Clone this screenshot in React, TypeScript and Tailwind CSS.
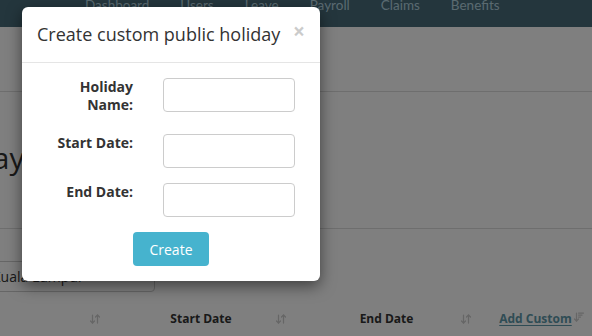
import { ArrowDownUp, ArrowDownWideNarrow } from "lucide-react"

const navItems = ["Dashboard", "Users", "Leave", "Payroll", "Claims", "Benefits"]

const FormRow = ({ label, className }: { label: string; className?: string }) => (
  <div className={`flex items-start ${className ?? ""}`}>
    <label className="w-[96px] text-right text-[14px] font-bold leading-[18px] text-[#333]">{label}</label>
    <input type="text" className="ml-[30px] h-[34px] w-[132px] rounded-[4px] border border-[#ccc] bg-white px-3 text-[14px] outline-none" />
  </div>
)

const App = () => {
  return (
    <div className="relative h-[336px] w-[592px] overflow-hidden bg-white font-['Open_Sans',sans-serif]">
      <nav className="-mt-[23px] flex h-[50px] items-center bg-[#486c7a] pl-[85px] pt-[6px] font-['Lato',sans-serif] text-[13.5px] text-[#b4d4e0]">
        <div className="flex gap-[31px]">
          {navItems.map((n) => (
            <span key={n}>{n}</span>
          ))}
        </div>
      </nav>

      <div className="h-[65px] border-b border-[#ddd]" />

      <div className="h-[137px] border-b border-[#ddd] pt-[49px]">
        <h1 className="-ml-[173px] whitespace-nowrap text-[30px] leading-[33px] text-[#333]">Public Holidays</h1>
      </div>

      <div className="pt-[32px]">
        <div className="-ml-[21px] flex h-[31px] w-[176px] items-center rounded-[4px] border border-[#ccc] px-3 text-[14px] text-[#333]">
          Kuala Lumpur
        </div>
      </div>

      <div className="mt-[9px] grid h-[36px] grid-cols-[108px_186px_185px_113px] items-center text-[12px] font-bold text-[#333]">
        <div className="relative h-full">
          <ArrowDownUp className="absolute right-[7px] top-[12px] text-[#ccc]" size={12} strokeWidth={2.5} />
        </div>
        <div className="relative flex h-full items-center justify-center">
          Start Date
          <ArrowDownUp className="absolute right-[7px] top-[12px] text-[#ccc]" size={12} strokeWidth={2.5} />
        </div>
        <div className="relative flex h-full items-center justify-center">
          End Date
          <ArrowDownUp className="absolute right-[7px] top-[12px] text-[#ccc]" size={12} strokeWidth={2.5} />
        </div>
        <div className="relative flex h-full items-center justify-center">
          <a className="text-[#5e98aa] underline underline-offset-2">Add Custom</a>
          <ArrowDownWideNarrow className="absolute right-[7px] top-[10px] text-[#ccc]" size={12} strokeWidth={2.5} />
        </div>
      </div>

      {/* modal backdrop */}
      <div className="absolute inset-0 bg-black/50" />

      <div className="absolute left-[22px] top-[7px] w-[298px] rounded-[6px] bg-white shadow-[0_5px_15px_rgba(0,0,0,0.5)]">
        <div className="flex h-[56px] items-start border-b border-[#e5e5e5] px-[15px] pt-[15px]">
          <h4 className="flex-1 text-[18px] leading-[25px] text-[#333]">Create custom public holiday</h4>
          <button className="-mt-[1px] text-[21px] font-bold leading-none text-black opacity-20">×</button>
        </div>
        <div className="p-[15px]">
          <FormRow label="Holiday Name:" className="mb-[20px] h-[36px]" />
          <FormRow label="Start Date:" className="mb-[15px]" />
          <FormRow label="End Date:" className="mb-[15px]" />
          <div className="flex justify-center">
            <button className="h-[34px] w-[76px] rounded-[4px] bg-[#46b3ce] text-[14px] text-white">Create</button>
          </div>
        </div>
      </div>
    </div>
  )
}

export default App
